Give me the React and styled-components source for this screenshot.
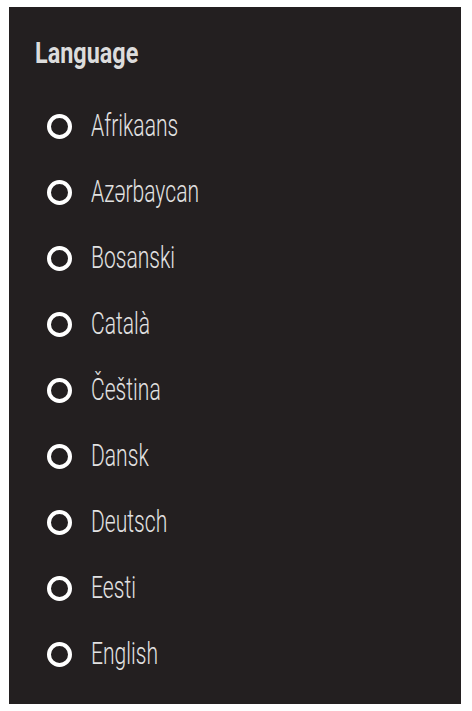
import React from 'react'
import styled, { createGlobalStyle } from 'styled-components'

const GlobalStyle = createGlobalStyle`
  body {
    margin: 0;
    background: #ffffff;
  }
`

const Panel = styled.fieldset`
  box-sizing: border-box;
  width: 452px;
  height: 697px;
  margin: 7px 0 0 9px;
  padding: 29px 26px 0;
  border: none;
  background-color: #231f20;
  font-family: 'Roboto', 'Liberation Sans', sans-serif;
`

// the face in the picture is a narrow DIN-like one; squeeze Roboto to fit
const Squeeze = styled.span`
  display: inline-block;
  white-space: nowrap;
  transform: scaleX(${(p) => p.$x});
  transform-origin: left center;
`

const Title = styled.legend`
  float: left;
  width: 100%;
  margin: 0 0 23px;
  padding: 0;
  color: #dcdcdc;
  font-size: 30px;
  font-weight: 700;
  line-height: 34px;
`

const List = styled.div`
  clear: both;
  display: flex;
  flex-direction: column;
  padding-left: 12px;
`

const Option = styled.label`
  display: flex;
  align-items: center;
  gap: 19px;
  height: 66px;
  color: #e2e2e2;
  font-size: 31px;
  font-weight: 300;
  line-height: 36px;
  cursor: pointer;
`

const Radio = styled.span`
  box-sizing: border-box;
  flex: none;
  width: 25px;
  height: 25px;
  border: 4px solid #ffffff;
  border-radius: 50%;
`

const languages = [
  'Afrikaans',
  'Azərbaycan',
  'Bosanski',
  'Català',
  'Čeština',
  'Dansk',
  'Deutsch',
  'Eesti',
  'English',
]

export default function App() {
  return (
    <>
      <GlobalStyle />
      <Panel>
        <Title>
          <Squeeze $x={0.78}>Language</Squeeze>
        </Title>
        <List>
          {languages.map((name) => (
            <Option key={name}>
              <Radio />
              <Squeeze $x={0.68}>{name}</Squeeze>
            </Option>
          ))}
        </List>
      </Panel>
    </>
  )
}
